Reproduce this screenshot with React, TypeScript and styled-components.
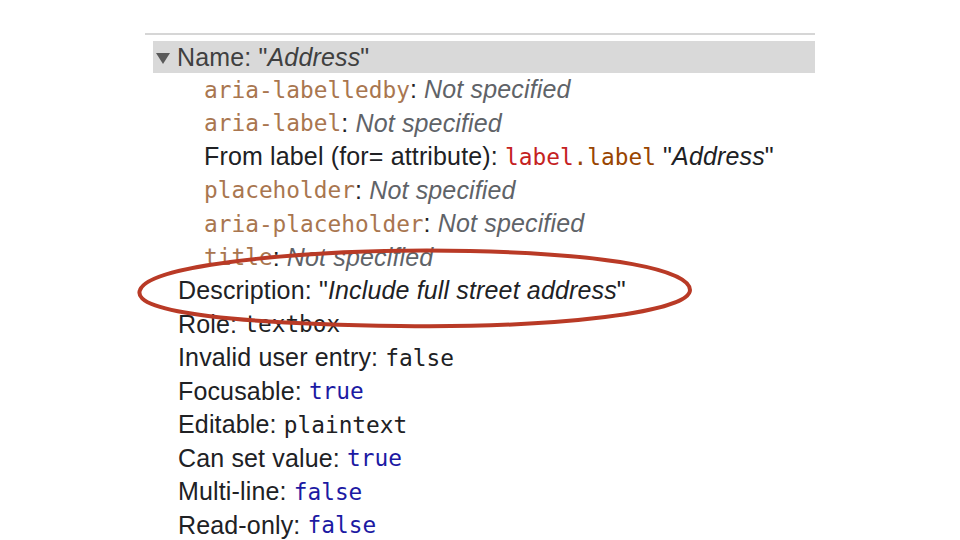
import React from "react";
import styled, { createGlobalStyle } from "styled-components";

const Global = createGlobalStyle`
  html, body { margin: 0; padding: 0; background: #ffffff; }
  body { width: 960px; height: 540px; overflow: hidden; }
`;

const Page = styled.div`
  position: relative;
  width: 960px;
  height: 540px;
  padding: 33px 145px 0 145px;
  box-sizing: border-box;
  font-family: "Liberation Sans", Arial, sans-serif;
  font-size: 25px;
  letter-spacing: 0.15px;
  color: #202124;
`;

const Panel = styled.div`
  border-top: 2px solid #d6d6d6;
  padding-top: 6px;
  display: flex;
  flex-direction: column;
`;

const Header = styled.div`
  display: flex;
  align-items: center;
  gap: 7px;
  height: 32px;
  margin-left: 8px;
  padding-left: 3px;
  background: #d9d9d9;
  color: #404040;
`;

const Triangle = styled.span`
  width: 0;
  height: 0;
  border-left: 7px solid transparent;
  border-right: 7px solid transparent;
  border-top: 11px solid #5a5a5a;
  margin-top: 2px;
`;

const Row = styled.div<{ $nested?: boolean }>`
  height: 33.5px;
  display: flex;
  align-items: center;
  white-space: pre;
  padding-left: ${(p) => (p.$nested ? "59px" : "33px")};
`;

const Mono = styled.span<{ $color?: string }>`
  font-family: "DejaVu Sans Mono", Menlo, monospace;
  font-size: 22.8px;
  letter-spacing: 0;
  color: ${(p) => p.$color || "#202124"};
`;

const Muted = styled.span`
  font-style: italic;
  color: #5f6368;
`;

const Em = styled.span`
  font-style: italic;
`;

const Annotation = styled.svg`
  position: absolute;
  left: 0;
  top: 0;
  pointer-events: none;
`;

const ATTR = "#a9764f";
const BLUE = "#1c1aa3";

export default function App() {
  return (
    <Page>
      <Global />
      <Panel>
        <Header>
          <Triangle />
          <span>
            Name: "<Em>Address</Em>"
          </span>
        </Header>
        <Row $nested>
          <Mono $color={ATTR}>aria-labelledby</Mono>: <Muted>Not specified</Muted>
        </Row>
        <Row $nested>
          <Mono $color={ATTR}>aria-label</Mono>: <Muted>Not specified</Muted>
        </Row>
        <Row $nested>
          From label (for= attribute): <Mono $color="#c5221f">label</Mono>
          <Mono $color="#994500">.label</Mono> "<Em>Address</Em>"
        </Row>
        <Row $nested>
          <Mono $color={ATTR}>placeholder</Mono>: <Muted>Not specified</Muted>
        </Row>
        <Row $nested>
          <Mono $color={ATTR}>aria-placeholder</Mono>: <Muted>Not specified</Muted>
        </Row>
        <Row $nested>
          <Mono $color={ATTR}>title</Mono>: <Muted>Not specified</Muted>
        </Row>
        <Row>
          Description: "<Em>Include full street address</Em>"
        </Row>
        <Row>
          Role: <Mono>textbox</Mono>
        </Row>
        <Row>
          Invalid user entry: <Mono>false</Mono>
        </Row>
        <Row>
          Focusable: <Mono $color={BLUE}>true</Mono>
        </Row>
        <Row>
          Editable: <Mono>plaintext</Mono>
        </Row>
        <Row>
          Can set value: <Mono $color={BLUE}>true</Mono>
        </Row>
        <Row>
          Multi-line: <Mono $color={BLUE}>false</Mono>
        </Row>
        <Row>
          Read-only: <Mono $color={BLUE}>false</Mono>
        </Row>
      </Panel>
      <Annotation width="960" height="540" viewBox="0 0 960 540">
        <path
          d="M 140 290 C 150 262, 330 248, 470 251 C 610 254, 690 270, 690 290 C 690 312, 560 328, 400 326 C 250 324, 130 314, 140 290 Z"
          fill="none"
          stroke="#b93a26"
          strokeWidth="4"
        />
      </Annotation>
    </Page>
  );
}
